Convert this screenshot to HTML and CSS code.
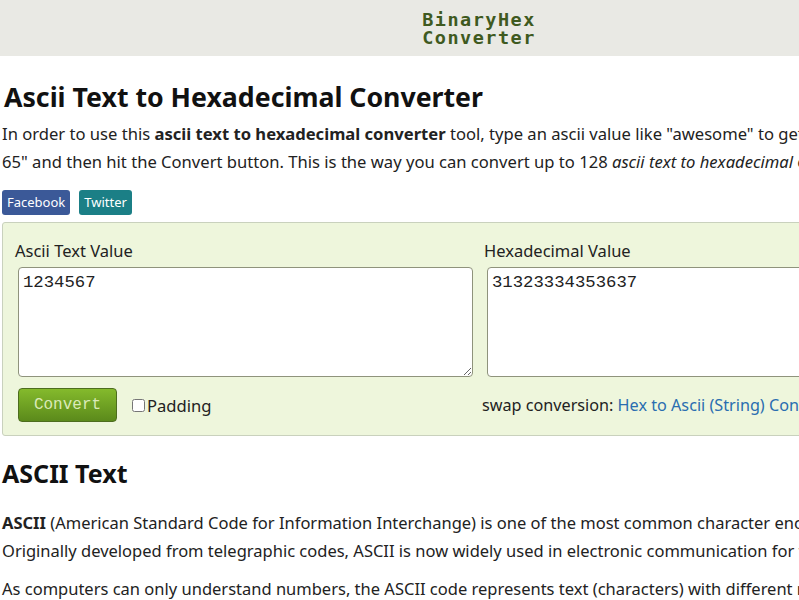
FILE: index.html
```html
<!DOCTYPE html>
<html lang="en">
<head>
<meta charset="utf-8">
<title>Ascii Text to Hexadecimal Converter</title>
<link rel="stylesheet" href="styles.css">
</head>
<body>
<div class="page">
  <header class="site-header">
    <a class="logo" href="#">BinaryHex<br>Converter</a>
  </header>
  <main class="content">
    <h1 class="title">Ascii Text to Hexadecimal Converter</h1>
    <p class="intro">In order to use this <b>ascii text to hexadecimal converter</b> tool, type an ascii value like "awesome" to get "61 77 65 73 6f 6d<br>65" and then hit the Convert button. This is the way you can convert up to 128 <i>ascii text to hexadecimal</i> characters.</p>
    <div class="share">
      <a class="share-btn fb" href="#">Facebook</a>
      <a class="share-btn tw" href="#">Twitter</a>
    </div>
    <form class="converter">
      <div class="col">
        <label class="field-label" for="src">Ascii Text Value</label>
        <textarea id="src" class="field">1234567</textarea>
        <div class="actions">
          <button type="button" class="convert">Convert</button>
          <label class="pad"><input type="checkbox" class="pad-box">Padding</label>
        </div>
      </div>
      <div class="col">
        <label class="field-label" for="dst">Hexadecimal Value</label>
        <textarea id="dst" class="field no-resize">31323334353637</textarea>
        <div class="swap">swap conversion: <a href="#">Hex to Ascii (String) Converter</a></div>
      </div>
    </form>
    <h2 class="section">ASCII Text</h2>
    <p class="body-text"><b>ASCII</b> (American Standard Code for Information Interchange) is one of the most common character encoding standards.<br>Originally developed from telegraphic codes, ASCII is now widely used in electronic communication for text data.</p>
    <p class="body-text">As computers can only understand numbers, the ASCII code represents text (characters) with different numbers.</p>
  </main>
</div>
</body>
</html>
```
FILE: styles.css
```css
html, body {
  margin: 0;
  padding: 0;
  overflow: hidden;
  background: #ffffff;
}
.page {
  width: 958px;
  font-family: "Noto Sans", "Open Sans", sans-serif;
  color: #222;
}
.site-header {
  height: 56px;
  background: #e9e9e4;
  display: flex;
  justify-content: center;
  align-items: center;
}
.logo {
  font-family: "DejaVu Sans Mono", monospace;
  font-weight: bold;
  font-size: 18.5px;
  letter-spacing: 1.5px;
  line-height: 18.5px;
  color: #3f5a1f;
  text-decoration: none;
  padding-top: 2px;
}
.content {
  padding: 0 2px;
}
.title {
  font-size: 26.7px;
  font-weight: bold;
  color: #111;
  margin: 22px 0 0 2px;
  line-height: 38px;
}
.intro {
  font-size: 16.6px;
  line-height: 28px;
  margin: 4px 0 0 0;
  white-space: nowrap;
}
.share {
  display: flex;
  gap: 9px;
  margin-top: 14px;
}
.share-btn {
  color: #fff;
  text-decoration: none;
  font-size: 13px;
  line-height: 25px;
  padding: 0 5px;
  border-radius: 3px;
}
.fb { background: #3b5998; }
.tw { background: #1b7f86; }
.converter {
  margin-top: 7px;
  background: #eef6dc;
  border: 1px solid #c9d1bd;
  border-radius: 3px;
  padding: 12px 12px 13px 12px;
  display: grid;
  grid-template-columns: 458px 1fr;
  column-gap: 11px;
}
.col {
  display: flex;
  flex-direction: column;
}
.field-label {
  font-size: 16.5px;
  line-height: 31px;
}
.field {
  margin: 1px 0 0 3px;
  height: 110px;
  box-sizing: border-box;
  border: 1px solid #8f937c;
  border-radius: 4px;
  background: #fff;
  font-family: "Liberation Mono", monospace;
  font-size: 17.3px;
  line-height: 20px;
  padding: 5px 4px;
  color: #222;
  resize: vertical;
}
.no-resize { resize: none; }
.actions {
  display: flex;
  align-items: center;
  margin-top: 11px;
  margin-left: 3px;
}
.convert {
  width: 99px;
  height: 34px;
  border: 1px solid #4d6d1e;
  border-radius: 4px;
  background: linear-gradient(#84ba2c, #5b8a1b);
  color: #dbeab8;
  font-family: "Liberation Mono", monospace;
  font-size: 16px;
  padding: 0;
}
.pad {
  display: flex;
  align-items: center;
  margin-left: 15px;
  font-size: 16.6px;
}
.pad-box {
  width: 13px;
  height: 13px;
  margin: 0 2px 0 0;
}
.swap {
  margin-top: 11px;
  line-height: 34px;
  font-size: 16.2px;
  margin-left: -2px;
  white-space: nowrap;
}
.swap a {
  color: #2a6db0;
  text-decoration: none;
}
.section {
  font-size: 25px;
  font-weight: bold;
  color: #111;
  margin: 21px 0 0 0;
  line-height: 32px;
}
.body-text {
  font-size: 16.5px;
  line-height: 28px;
  margin: 20px 0 0 0;
  white-space: nowrap;
}
.body-text + .body-text {
  margin-top: 10px;
}
```
